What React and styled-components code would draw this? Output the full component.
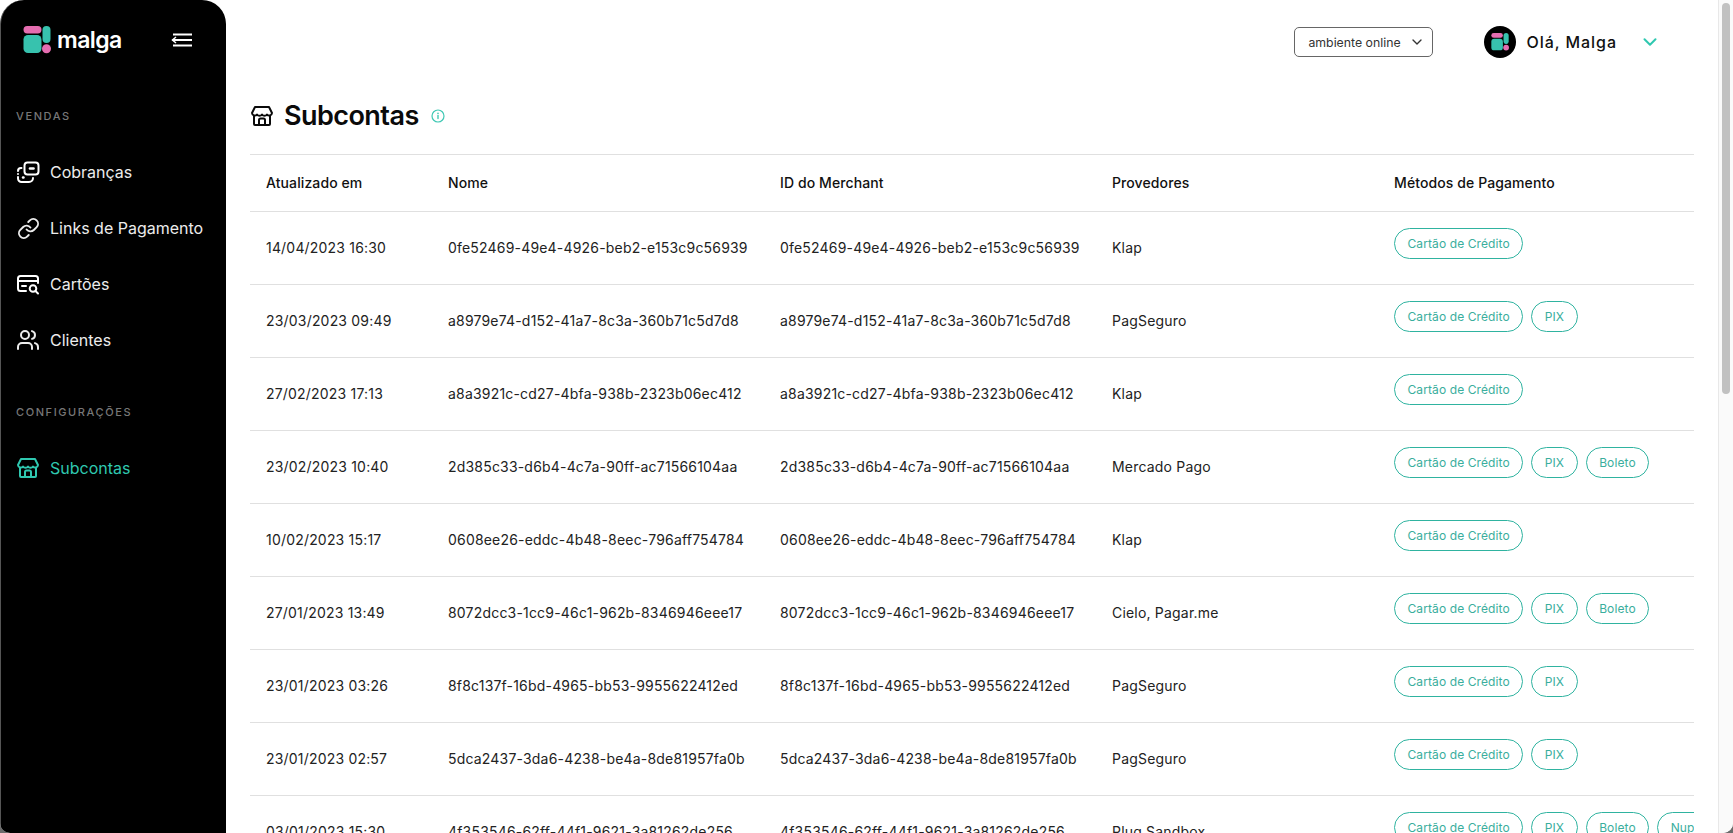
import React from "react";
import styled, { createGlobalStyle } from "styled-components";
import { Link, Users, ChevronDown } from "lucide-react";

const Global = createGlobalStyle`
  html, body { margin: 0; padding: 0; height: 100%; overflow: hidden; background: #6b6b6b; }
  #root { height: 100%; }
  * { box-sizing: border-box; }
`;

const Window = styled.div`
  width: 1733px; height: 833px; display: flex; overflow: hidden;
  background: #fff; border-radius: 0 0 10px 10px;
  font-family: Inter, "Liberation Sans", sans-serif; color: #111;
`;
const Sidebar = styled.aside`
  width: 226px; flex: none; height: 100%; background: #000; color: #fff;
  border-radius: 24px 24px 0 0; border-left: 1px solid #555;
  display: flex; flex-direction: column;
`;
const LogoRow = styled.div`
  height: 80px; display: flex; align-items: center; justify-content: space-between;
  padding: 0 33px 0 22px; flex: none;
`;
const Brand = styled.div`display: flex; align-items: center; gap: 6px;`;
const BrandName = styled.span`
  font-size: 23px; font-weight: 600; letter-spacing: -0.55px; line-height: 28px; color: #fff;
`;
const SectionLabel = styled.div`
  height: 16px; line-height: 16px; font-size: 11px; font-weight: 500; letter-spacing: 1.6px;
  color: #777; padding-left: 15px; margin-top: ${p => p.$top}px; margin-bottom: ${p => p.$bottom}px;
`;
const NavItem = styled.div`
  height: 56px; display: flex; align-items: center; gap: 10px; padding-left: 15px;
  font-size: 16px; letter-spacing: 0; color: ${p => (p.$active ? "#2fc8b0" : "#ececec")};
`;
const NavIcon = styled.span`
  width: 24px; height: 24px; display: flex; align-items: center; justify-content: center; flex: none;
`;
const Main = styled.main`
  flex: 1; min-width: 0; height: 100%; padding: 0 24px; display: flex; flex-direction: column; overflow: hidden;
`;
const TopBar = styled.header`
  height: 84px; flex: none; display: flex; align-items: center; justify-content: flex-end;
  padding-right: 33px; gap: 51px;
`;
const EnvSelect = styled.div`
  width: 139px; height: 30px; border: 1px solid #666; border-radius: 5px; display: flex; align-items: center;
  justify-content: space-between; padding: 0 7px 0 13px; font-size: 12.3px; color: #333;
`;
const User = styled.div`display: flex; align-items: center;`;
const Avatar = styled.div`
  width: 32px; height: 32px; border-radius: 50%; background: #000; display: flex; align-items: center; justify-content: center;
`;
const Greeting = styled.span`
  margin-left: 10px; margin-right: 22px; font-size: 16px; letter-spacing: 0.95px; font-weight: 500; color: #111;
`;
const TitleRow = styled.div`
  height: 70px; flex: none; display: flex; align-items: center; padding: 0 0 6px 0;
`;
const Title = styled.h1`
  margin: 0 12px 0 10px; font-size: 27px; line-height: 32px; font-weight: 600; letter-spacing: -0.55px; color: #0a0a0a;
`;
const TableWrap = styled.div`flex: 1; min-height: 0; overflow: hidden;`;
const Table = styled.table`
  width: 100%; table-layout: fixed; border-collapse: collapse; border-top: 1px solid #e0e0e0;
`;
const Th = styled.th`
  height: 57px; padding: 0 0 1px 16px; text-align: left; font-size: 14px; font-weight: 500; letter-spacing: 0.1px; color: #111;
  border-bottom: 1px solid #e0e0e0; white-space: nowrap; width: ${p => p.$w}px;
`;
const Td = styled.td`
  height: 73px; padding: 0 0 1px 16px; font-size: 14px; letter-spacing: 0.19px; color: #222; border-bottom: 1px solid #e0e0e0; white-space: nowrap;
  overflow: hidden;
`;
const PillRow = styled.div`display: flex; gap: 8px; margin-bottom: 8px; overflow: hidden;`;
const Pill = styled.span`
  flex: none; height: 31px; padding: 0 12.5px; display: inline-flex; align-items: center; border: 1px solid #2fb3a0;
  border-radius: 16px; font-size: 12px; letter-spacing: 0.1px; color: #3aae9d;
`;
const ScrollTrack = styled.div`
  width: 15px; flex: none; height: 100%; background: #fafafa; border-left: 1px solid #e8e8e8; padding: 3px 3px 0 3px;
`;
const ScrollThumb = styled.div`height: 391px; background: #c1c1c1; border-radius: 5px;`;

const LogoMark = ({ size = 28 }) => (
  <svg width={size} height={size} viewBox="0 0 28 28">
    <rect x="0.5" y="0" width="18" height="7.5" rx="3.7" fill="#e56db0" />
    <rect x="0.5" y="9" width="18" height="18" rx="4.5" fill="#37c2ae" />
    <rect x="19.5" y="0" width="8" height="17" rx="4" fill="#37c2ae" />
    <circle cx="23.5" cy="22.7" r="4.5" fill="#e56db0" />
  </svg>
);

const Menu = () => (
  <svg width="22" height="14" viewBox="0 0 22 14" fill="none" stroke="#fff" strokeWidth="2">
    <path d="M2 1.5h19M1.5 7h19.5M2 12.5h19" />
    <path d="M5 4 1.5 7 5 10" strokeWidth="1.5" />
  </svg>
);

const Store = ({ size = 24, color = "#fff", sw = 2 }) => (
  <svg width={size} height={size} viewBox="0 0 24 24" fill="none" stroke={color} strokeWidth={sw} strokeLinejoin="round" strokeLinecap="round">
    <path d="M5 3h14l3 6a2.800 2.800 0 0 1-5 1.500A3 3 0 0 1 12 10.500a3 3 0 0 1-5 0A2.800 2.800 0 0 1 2 9z" />
    <path d="M4 12v8a1 1 0 0 0 1 1h14a1 1 0 0 0 1-1v-8" />
    <path d="M9 21v-5a1.500 1.500 0 0 1 1.500-1.500h3A1.500 1.500 0 0 1 15 16v5" />
  </svg>
);

const Charges = () => (
  <svg width="24" height="24" viewBox="0 0 24 24" fill="none" stroke="#fff" strokeWidth="2" strokeLinecap="round" strokeLinejoin="round">
    <rect x="8.500" y="2.500" width="14" height="12" rx="3" />
    <path d="M14 8.500h3.500" strokeWidth="2.600" />
    <path d="M5.500 8H5a3 3 0 0 0-3 3" />
    <path d="M2 14v0M2 17v1.500a3.500 3.500 0 0 0 3.500 3.500H13a4 4 0 0 0 4-4" />
    <path d="M7 17.500h.5" strokeWidth="2.400" />
  </svg>
);

const CardSearch = () => (
  <svg width="24" height="24" viewBox="0 0 24 24" fill="none" stroke="#fff" strokeWidth="2" strokeLinecap="round" strokeLinejoin="round">
    <path d="M10 19H4.500A2.500 2.500 0 0 1 2 16.500v-10A2.500 2.500 0 0 1 4.500 4h15A2.500 2.500 0 0 1 22 6.500V11" />
    <path d="M2 9h20" />
    <path d="M6 14h4" />
    <circle cx="17" cy="16.500" r="3.300" />
    <path d="m19.500 19 2.500 2.500" />
  </svg>
);

const Info = () => (
  <svg width="14" height="14" viewBox="0 0 14 14" fill="none" stroke="#3fc8b4" strokeWidth="1.200" strokeLinecap="round">
    <circle cx="7" cy="7" r="6" />
    <path d="M7 6.500v3" strokeWidth="1.400" />
    <path d="M7 4.300v.1" strokeWidth="1.600" />
  </svg>
);

const rows = [
  ["14/04/2023 16:30", "0fe52469-49e4-4926-beb2-e153c9c56939", "Klap", ["Cartão de Crédito"]],
  ["23/03/2023 09:49", "a8979e74-d152-41a7-8c3a-360b71c5d7d8", "PagSeguro", ["Cartão de Crédito", "PIX"]],
  ["27/02/2023 17:13", "a8a3921c-cd27-4bfa-938b-2323b06ec412", "Klap", ["Cartão de Crédito"]],
  ["23/02/2023 10:40", "2d385c33-d6b4-4c7a-90ff-ac71566104aa", "Mercado Pago", ["Cartão de Crédito", "PIX", "Boleto"]],
  ["10/02/2023 15:17", "0608ee26-eddc-4b48-8eec-796aff754784", "Klap", ["Cartão de Crédito"]],
  ["27/01/2023 13:49", "8072dcc3-1cc9-46c1-962b-8346946eee17", "Cielo, Pagar.me", ["Cartão de Crédito", "PIX", "Boleto"]],
  ["23/01/2023 03:26", "8f8c137f-16bd-4965-bb53-9955622412ed", "PagSeguro", ["Cartão de Crédito", "PIX"]],
  ["23/01/2023 02:57", "5dca2437-3da6-4238-be4a-8de81957fa0b", "PagSeguro", ["Cartão de Crédito", "PIX"]],
  ["03/01/2023 15:30", "4f353546-62ff-44f1-9621-3a81262de256", "Plug Sandbox", ["Cartão de Crédito", "PIX", "Boleto", "Nupay"]],
];

export default function App() {
  return (
    <>
      <Global />
      <Window>
        <Sidebar>
          <LogoRow>
            <Brand>
              <LogoMark />
              <BrandName>malga</BrandName>
            </Brand>
            <Menu />
          </LogoRow>
          <SectionLabel $top={28} $bottom={20}>VENDAS</SectionLabel>
          <NavItem><NavIcon><Charges /></NavIcon>Cobranças</NavItem>
          <NavItem><NavIcon><Link size={23} strokeWidth={2} /></NavIcon>Links de Pagamento</NavItem>
          <NavItem><NavIcon><CardSearch /></NavIcon>Cartões</NavItem>
          <NavItem><NavIcon><Users size={24} strokeWidth={2} /></NavIcon>Clientes</NavItem>
          <SectionLabel $top={36} $bottom={20}>CONFIGURAÇÕES</SectionLabel>
          <NavItem $active><NavIcon><Store color="#2fc8b0" /></NavIcon>Subcontas</NavItem>
        </Sidebar>
        <Main>
          <TopBar>
            <EnvSelect>ambiente online<ChevronDown size={16} strokeWidth={2} color="#333" /></EnvSelect>
            <User>
              <Avatar><LogoMark size={18} /></Avatar>
              <Greeting>Olá, Malga</Greeting>
              <ChevronDown size={22} strokeWidth={2.2} color="#2fc8b0" />
            </User>
          </TopBar>
          <TitleRow>
            <Store size={24} color="#0a0a0a" />
            <Title>Subcontas</Title>
            <Info />
          </TitleRow>
          <TableWrap>
            <Table>
              <thead>
                <tr>
                  <Th $w={182}>Atualizado em</Th>
                  <Th $w={332}>Nome</Th>
                  <Th $w={332}>ID do Merchant</Th>
                  <Th $w={282}>Provedores</Th>
                  <Th>Métodos de Pagamento</Th>
                </tr>
              </thead>
              <tbody>
                {rows.map(r => (
                  <tr key={r[1]}>
                    <Td>{r[0]}</Td>
                    <Td>{r[1]}</Td>
                    <Td>{r[1]}</Td>
                    <Td>{r[2]}</Td>
                    <Td><PillRow>{r[3].map(m => <Pill key={m}>{m}</Pill>)}</PillRow></Td>
                  </tr>
                ))}
              </tbody>
            </Table>
          </TableWrap>
        </Main>
        <ScrollTrack><ScrollThumb /></ScrollTrack>
      </Window>
    </>
  );
}
